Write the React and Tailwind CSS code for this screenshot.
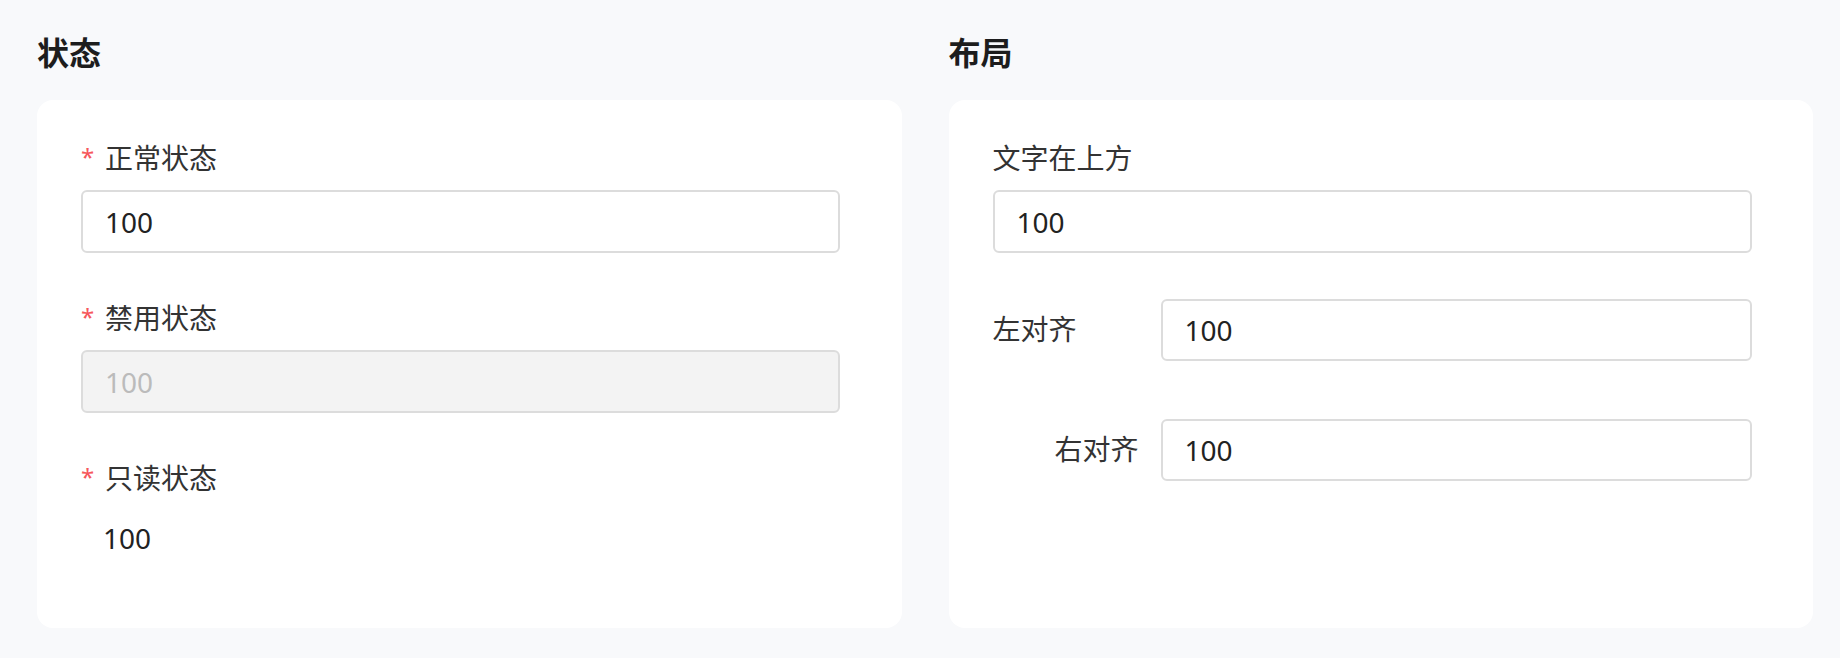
import { useState } from 'react';

const cjk = "font-['Noto_Sans_CJK_SC','Noto_Sans',sans-serif]";
const latin = "font-['Noto_Sans','Noto_Sans_CJK_SC',sans-serif]";

function Label({ required, children, className = '' }) {
  return (
    <div className={`flex h-[44px] items-center text-[28px] leading-[44px] text-[#333333] ${cjk} ${className}`}>
      {required ? (
        <span className={`inline-block w-[24px] text-[24px] text-[#f6585c] ${latin}`}>*</span>
      ) : null}
      <span>{children}</span>
    </div>
  );
}

function Field({ value, onChange, disabled, className = 'w-[759px] h-[63px]' }) {
  return (
    <input
      type="text"
      value={value}
      disabled={disabled}
      onChange={(e) => onChange?.(e.target.value)}
      className={`block rounded-[6px] border-2 px-[22px] text-[28px] outline-none ${latin} ${className} ${
        disabled
          ? 'border-[#dcdcdc] bg-[#f3f3f3] text-[#bbbbbb]'
          : 'border-[#dcdcdc] bg-white text-[#222222]'
      }`}
    />
  );
}

export default function App() {
  const [normal, setNormal] = useState('100');
  const [top, setTop] = useState('100');
  const [left, setLeft] = useState('100');
  const [right, setRight] = useState('100');

  return (
    <div className="grid h-[658px] w-[1840px] grid-cols-2 items-start gap-x-[47px] bg-[#f8f9fb] pl-[37px] pr-[27px] pt-[27px]">
      <section>
        <h2 className={`text-[32px] font-bold leading-[48px] text-[#1d1d1d] ${cjk}`}>状态</h2>
        <div className="mt-[25px] h-[528px] rounded-[16px] bg-white pl-[44px] pt-[35px]">
          <Label required>正常状态</Label>
          <Field value={normal} onChange={setNormal} className="mt-[11px] w-[759px] h-[63px]" />

          <Label required className="mt-[42px]">禁用状态</Label>
          <Field value="100" disabled className="mt-[11px] w-[759px] h-[63px]" />

          <Label required className="mt-[42px]">只读状态</Label>
          <div className={`mt-[17px] pl-[22px] text-[28px] leading-[44px] text-[#222222] ${latin}`}>100</div>
        </div>
      </section>

      <section>
        <h2 className={`text-[32px] font-bold leading-[48px] text-[#1d1d1d] ${cjk}`}>布局</h2>
        <div className="mt-[25px] h-[528px] rounded-[16px] bg-white pl-[44px] pt-[35px]">
          <Label>文字在上方</Label>
          <Field value={top} onChange={setTop} className="mt-[11px] w-[759px] h-[63px]" />

          <div className="mt-[46px] flex items-center">
            <Label className="w-[168px] pb-[4px]">左对齐</Label>
            <Field value={left} onChange={setLeft} className="w-[591px] h-[62px]" />
          </div>

          <div className="mt-[58px] flex items-center">
            <Label className="w-[168px] justify-end pb-[4px] pr-[22px]">右对齐</Label>
            <Field value={right} onChange={setRight} className="w-[591px] h-[62px]" />
          </div>
        </div>
      </section>
    </div>
  );
}
